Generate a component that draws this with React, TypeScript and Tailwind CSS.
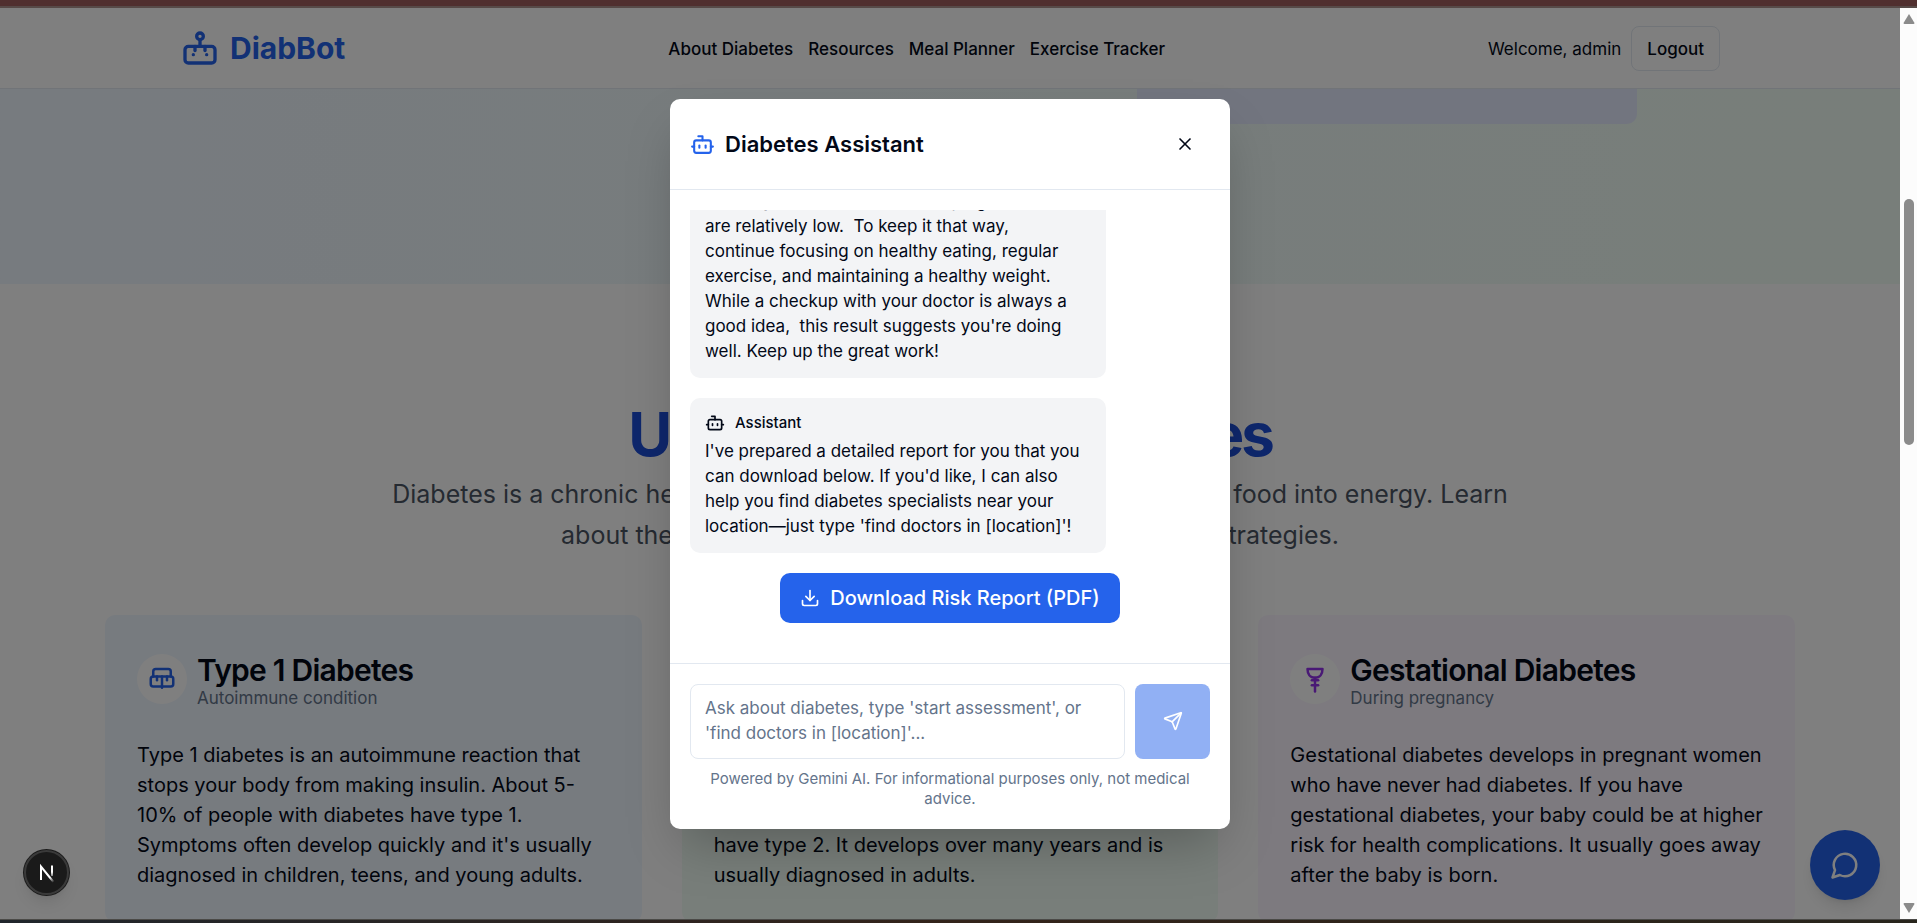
import type { ReactNode } from "react";
import { Bot, Download, Send, X } from "lucide-react";

const navLinks = ["About Diabetes", "Resources", "Meal Planner", "Exercise Tracker"];

function LogoIcon() {
  return (
    <svg className="size-10" viewBox="0 0 24 24" fill="none" stroke="currentColor" strokeWidth="2" strokeLinecap="round" strokeLinejoin="round" aria-hidden="true">
      <rect x="3" y="11" width="18" height="10" rx="2" />
      <circle cx="12" cy="5" r="2" />
      <path d="M12 7v4" />
      <path d="M9 11v2.5" />
      <path d="M15 11v2.5" />
      <path d="M8 16v.01" />
      <path d="M16 16v.01" />
    </svg>
  );
}

function PancreasIcon() {
  return (
    <svg className="size-[30px] text-[#2563eb]" viewBox="0 0 24 24" fill="none" stroke="currentColor" strokeWidth="2" strokeLinecap="round" strokeLinejoin="round" aria-hidden="true">
      <rect x="3" y="10" width="18" height="8" rx="2" />
      <path d="M5 10V6a2 2 0 0 1 2-2h10a2 2 0 0 1 2 2v4" />
      <path d="M12 10v9" />
      <path d="M8 10v3" />
      <path d="M16 10v3" />
    </svg>
  );
}

function CellIcon() {
  return (
    <svg className="size-[30px] text-[#16a34a]" viewBox="0 0 24 24" fill="none" stroke="currentColor" strokeWidth="2" strokeLinecap="round" aria-hidden="true">
      <circle cx="12" cy="12" r="8" />
      <path d="M12 8v8M8 12h8" />
    </svg>
  );
}

function PregnancyIcon() {
  return (
    <svg className="size-[30px] text-[#9333ea]" viewBox="0 0 24 24" fill="none" stroke="currentColor" strokeWidth="2" strokeLinecap="round" strokeLinejoin="round" aria-hidden="true">
      <path d="M6 4h12c0 4-2 7-6 7s-6-3-6-7Z" />
      <path d="M12 11v11" />
      <path d="M9.500 13h5" />
      <path d="M9.500 17h5" />
    </svg>
  );
}

type TypeCardProps = { icon: ReactNode; title: string; subtitle: string; text: string; tone: string };

function TypeCard({ icon, title, subtitle, text, tone }: TypeCardProps) {
  return (
    <article className={`rounded-[10px] p-8 ${tone}`}>
      <div className="flex items-center gap-[10px]">
        <div className="flex size-[50px] shrink-0 items-center justify-center rounded-full bg-white">{icon}</div>
        <div className="pt-2">
          <h3 className="text-[30px] leading-[30px] font-semibold tracking-tight">{title}</h3>
          <p className="text-[17px] leading-[26px] text-[#64748b]">{subtitle}</p>
        </div>
      </div>
      <p className="mt-[29px] text-xl leading-[30px] whitespace-pre-line">{text}</p>
    </article>
  );
}

function Header() {
  return (
    <header className="relative border-b border-[#e2e8f0] bg-white">
      <div className="mx-auto flex h-20 max-w-[1600px] items-center justify-between px-[30px]">
        <a href="#home" className="flex items-center gap-[10px] text-3xl font-bold text-[#2563eb]">
          <LogoIcon />
          DiabBot
        </a>
        <nav className="flex gap-[15px] pt-0.5 text-[17px] leading-[26px] font-medium">
          {navLinks.map((label) => (
            <a key={label} href="#section">{label}</a>
          ))}
        </nav>
        <div className="flex items-center gap-[10px] text-[17px] leading-[26px]">
          <span className="pt-0.5">Welcome, admin</span>
          <button type="button" className="h-[45px] rounded-lg border border-[#e2e8f0] px-[15px] pt-0.5 font-medium">Logout</button>
        </div>
      </div>
    </header>
  );
}

function Bubble({ children }: { children: ReactNode }) {
  return (
    <div className="w-4/5 shrink-0 rounded-[10px] bg-[#f3f4f6] px-[15px] pt-[15px] pb-[14px]">
      <div className="flex items-center gap-[10px] text-[15px] leading-5 font-medium">
        <Bot className="size-5" aria-hidden="true" />
        Assistant
      </div>
      <p className="mt-[6px] text-[17px] leading-[25px] whitespace-pre">{children}</p>
    </div>
  );
}

const resultMessage = `means your chances of developing diabetes
are relatively low.  To keep it that way,
continue focusing on healthy eating, regular
exercise, and maintaining a healthy weight.
While a checkup with your doctor is always a
good idea,  this result suggests you're doing
well. Keep up the great work!`;

const reportMessage = `I've prepared a detailed report for you that you
can download below. If you'd like, I can also
help you find diabetes specialists near your
location—just type 'find doctors in [location]'!`;

function ChatDialog() {
  return (
    <div role="dialog" aria-labelledby="chat-title" className="flex h-full max-h-[730px] w-[560px] flex-col rounded-[10px] bg-white shadow-2xl">
      <div className="flex h-[91px] shrink-0 items-center justify-between border-b border-[#e2e8f0] px-5">
        <h2 id="chat-title" className="flex items-center gap-[10px] pt-0.5 text-[22px] font-semibold">
          <Bot className="size-[25px] text-[#2563eb]" aria-hidden="true" />
          Diabetes Assistant
        </h2>
        <button type="button" aria-label="Close" className="flex size-[50px] items-center justify-center">
          <X className="size-5" aria-hidden="true" />
        </button>
      </div>
      <div className="flex min-h-0 flex-1 flex-col p-5">
        <div className="flex min-h-0 flex-1 flex-col justify-end gap-5 overflow-hidden pb-5">
          <Bubble>{resultMessage}</Bubble>
          <Bubble>{reportMessage}</Bubble>
          <button type="button" className="flex h-[50px] shrink-0 items-center gap-[10px] self-center rounded-[10px] bg-[#2563eb] px-5 text-xl font-medium text-white">
            <Download className="size-5" aria-hidden="true" />
            Download Risk Report (PDF)
          </button>
        </div>
      </div>
      <form className="shrink-0 border-t border-[#e2e8f0] p-5">
        <div className="flex gap-[10px]">
          <textarea
            aria-label="Message"
            rows={2}
            className="h-[75px] min-w-0 flex-1 resize-none rounded-lg border border-[#e2e8f0] px-[14px] py-[11px] text-[17px] leading-[25px] placeholder:text-[#64748b]"
            placeholder="Ask about diabetes, type 'start assessment', or 'find doctors in [location]'..."
          />
          <button type="button" aria-label="Send" disabled className="flex w-[75px] items-center justify-center rounded-lg bg-[#2563eb] text-white opacity-50">
            <Send className="size-5" aria-hidden="true" />
          </button>
        </div>
        <p className="mt-[10px] text-center text-[15px] leading-5 text-[#64748b]">
          Powered by Gemini AI. For informational purposes only, not medical advice.
        </p>
      </form>
    </div>
  );
}

function ScrollBar() {
  return (
    <div className="flex w-[17px] shrink-0 flex-col items-center justify-between bg-[#fcfcfc] py-[5px]" aria-hidden="true">
      <svg className="h-3 w-3 fill-[#8b8b8b]" viewBox="0 0 12 12"><path d="M6 1 11.500 10q0 1-1 1h-9q-1 0-1-1Z" /></svg>
      <div className="mt-[174px] h-[246px] w-[10px] rounded-full bg-[#8b8b8b]" />
      <div className="flex-1" />
      <svg className="h-3 w-3 fill-[#8b8b8b]" viewBox="0 0 12 12"><path d="M6 11 .500 2q0-1 1-1h9q1 0 1 1Z" /></svg>
    </div>
  );
}

export default function App() {
  return (
    <div className="flex h-screen flex-col overflow-hidden font-['Inter',sans-serif] text-[#020817]">
      <div className="h-2 shrink-0 border-b-2 border-[#574a48] bg-[#502f2f]" />
      <div className="flex min-h-0 flex-1">
        <div className="relative min-w-0 flex-1 overflow-hidden bg-white">
          <Header />
          <div className="h-[195px] bg-linear-to-r from-[#eff6ff] to-[#f0fdf4]">
            <div className="mx-auto flex max-w-[1600px] justify-end">
              <div className="mr-[113px] h-[35px] w-[500px] rounded-b-[10px] bg-[#e4ebfe]" />
            </div>
          </div>
          <section className="mx-auto max-w-[1750px] px-[30px] pt-[120px]">
            <h1 className="text-center text-6xl leading-[60px] font-bold tracking-tighter text-[#1d4ed8]">Understanding Diabetes</h1>
            <p className="mx-auto mt-[10px] max-w-[1125px] text-center text-[25px] leading-[41px] text-[#4b5563]">
              Diabetes is a chronic health condition that affects how your body turns food into energy. Learn about the different types, symptoms, and management strategies.
            </p>
            <div className="mt-[59px] grid grid-cols-3 gap-10">
              <TypeCard
                icon={<PancreasIcon />}
                title="Type 1 Diabetes"
                subtitle="Autoimmune condition"
                tone="bg-[#eff6ff]"
                text={"Type 1 diabetes is an autoimmune reaction that stops your body from making insulin. About 5-10% of people with diabetes have type 1. Symptoms often develop quickly and it's usually diagnosed in children, teens, and young adults."}
              />
              <TypeCard
                icon={<CellIcon />}
                title="Type 2 Diabetes"
                subtitle="Most common form"
                tone="bg-[#f0fdf4]"
                text={"With type 2 diabetes, your body doesn't use\ninsulin well and can't keep blood sugar at\nnormal levels. About 90-95% of people\nhave type 2. It develops over many years and is\nusually diagnosed in adults."}
              />
              <TypeCard
                icon={<PregnancyIcon />}
                title="Gestational Diabetes"
                subtitle="During pregnancy"
                tone="bg-[#faf5ff]"
                text="Gestational diabetes develops in pregnant women who have never had diabetes. If you have gestational diabetes, your baby could be at higher risk for health complications. It usually goes away after the baby is born."
              />
            </div>
          </section>
          <button type="button" aria-label="Open chat" className="absolute right-5 bottom-[19px] flex size-[70px] items-center justify-center rounded-full bg-[#2563eb] text-white shadow-lg">
            <svg className="size-[30px]" viewBox="0 0 24 24" fill="none" stroke="currentColor" strokeWidth="2" strokeLinecap="round" strokeLinejoin="round" aria-hidden="true">
              <path d="M7.900 20A9 9 0 1 0 4 16.100L2 22Z" />
            </svg>
          </button>
          <div className="absolute inset-0 flex items-center justify-center bg-black/50">
            <ChatDialog />
          </div>
          <button type="button" aria-label="Developer tools" className="absolute bottom-6 left-6 flex size-[45px] items-center justify-center rounded-full border-2 border-[#3a3a3a] bg-[#1a1a1a] shadow-lg ring-1 ring-[#1a1a1a]">
            <svg className="size-5" viewBox="0 0 20 20" fill="none" strokeWidth="2" aria-hidden="true">
              <defs>
                <linearGradient id="stem" x1="0" y1="2" x2="0" y2="16" gradientUnits="userSpaceOnUse">
                  <stop offset="0.5" stopColor="#fff" />
                  <stop offset="1" stopColor="#fff" stopOpacity="0" />
                </linearGradient>
                <linearGradient id="slash" x1="4" y1="3" x2="17" y2="19" gradientUnits="userSpaceOnUse">
                  <stop offset="0.700" stopColor="#fff" />
                  <stop offset="1" stopColor="#fff" stopOpacity="0" />
                </linearGradient>
              </defs>
              <path d="M4 17V3.500L16.500 19" stroke="url(#slash)" />
              <path d="M15 2.500V13" stroke="url(#stem)" />
              <path d="M4 17V3.500" stroke="#fff" />
            </svg>
          </button>
        </div>
        <ScrollBar />
      </div>
      <div className="h-1 shrink-0 border-t border-[#4b4a47] bg-linear-to-r from-[#20262c] via-[#33231a] to-[#28251c]" />
    </div>
  );
}
